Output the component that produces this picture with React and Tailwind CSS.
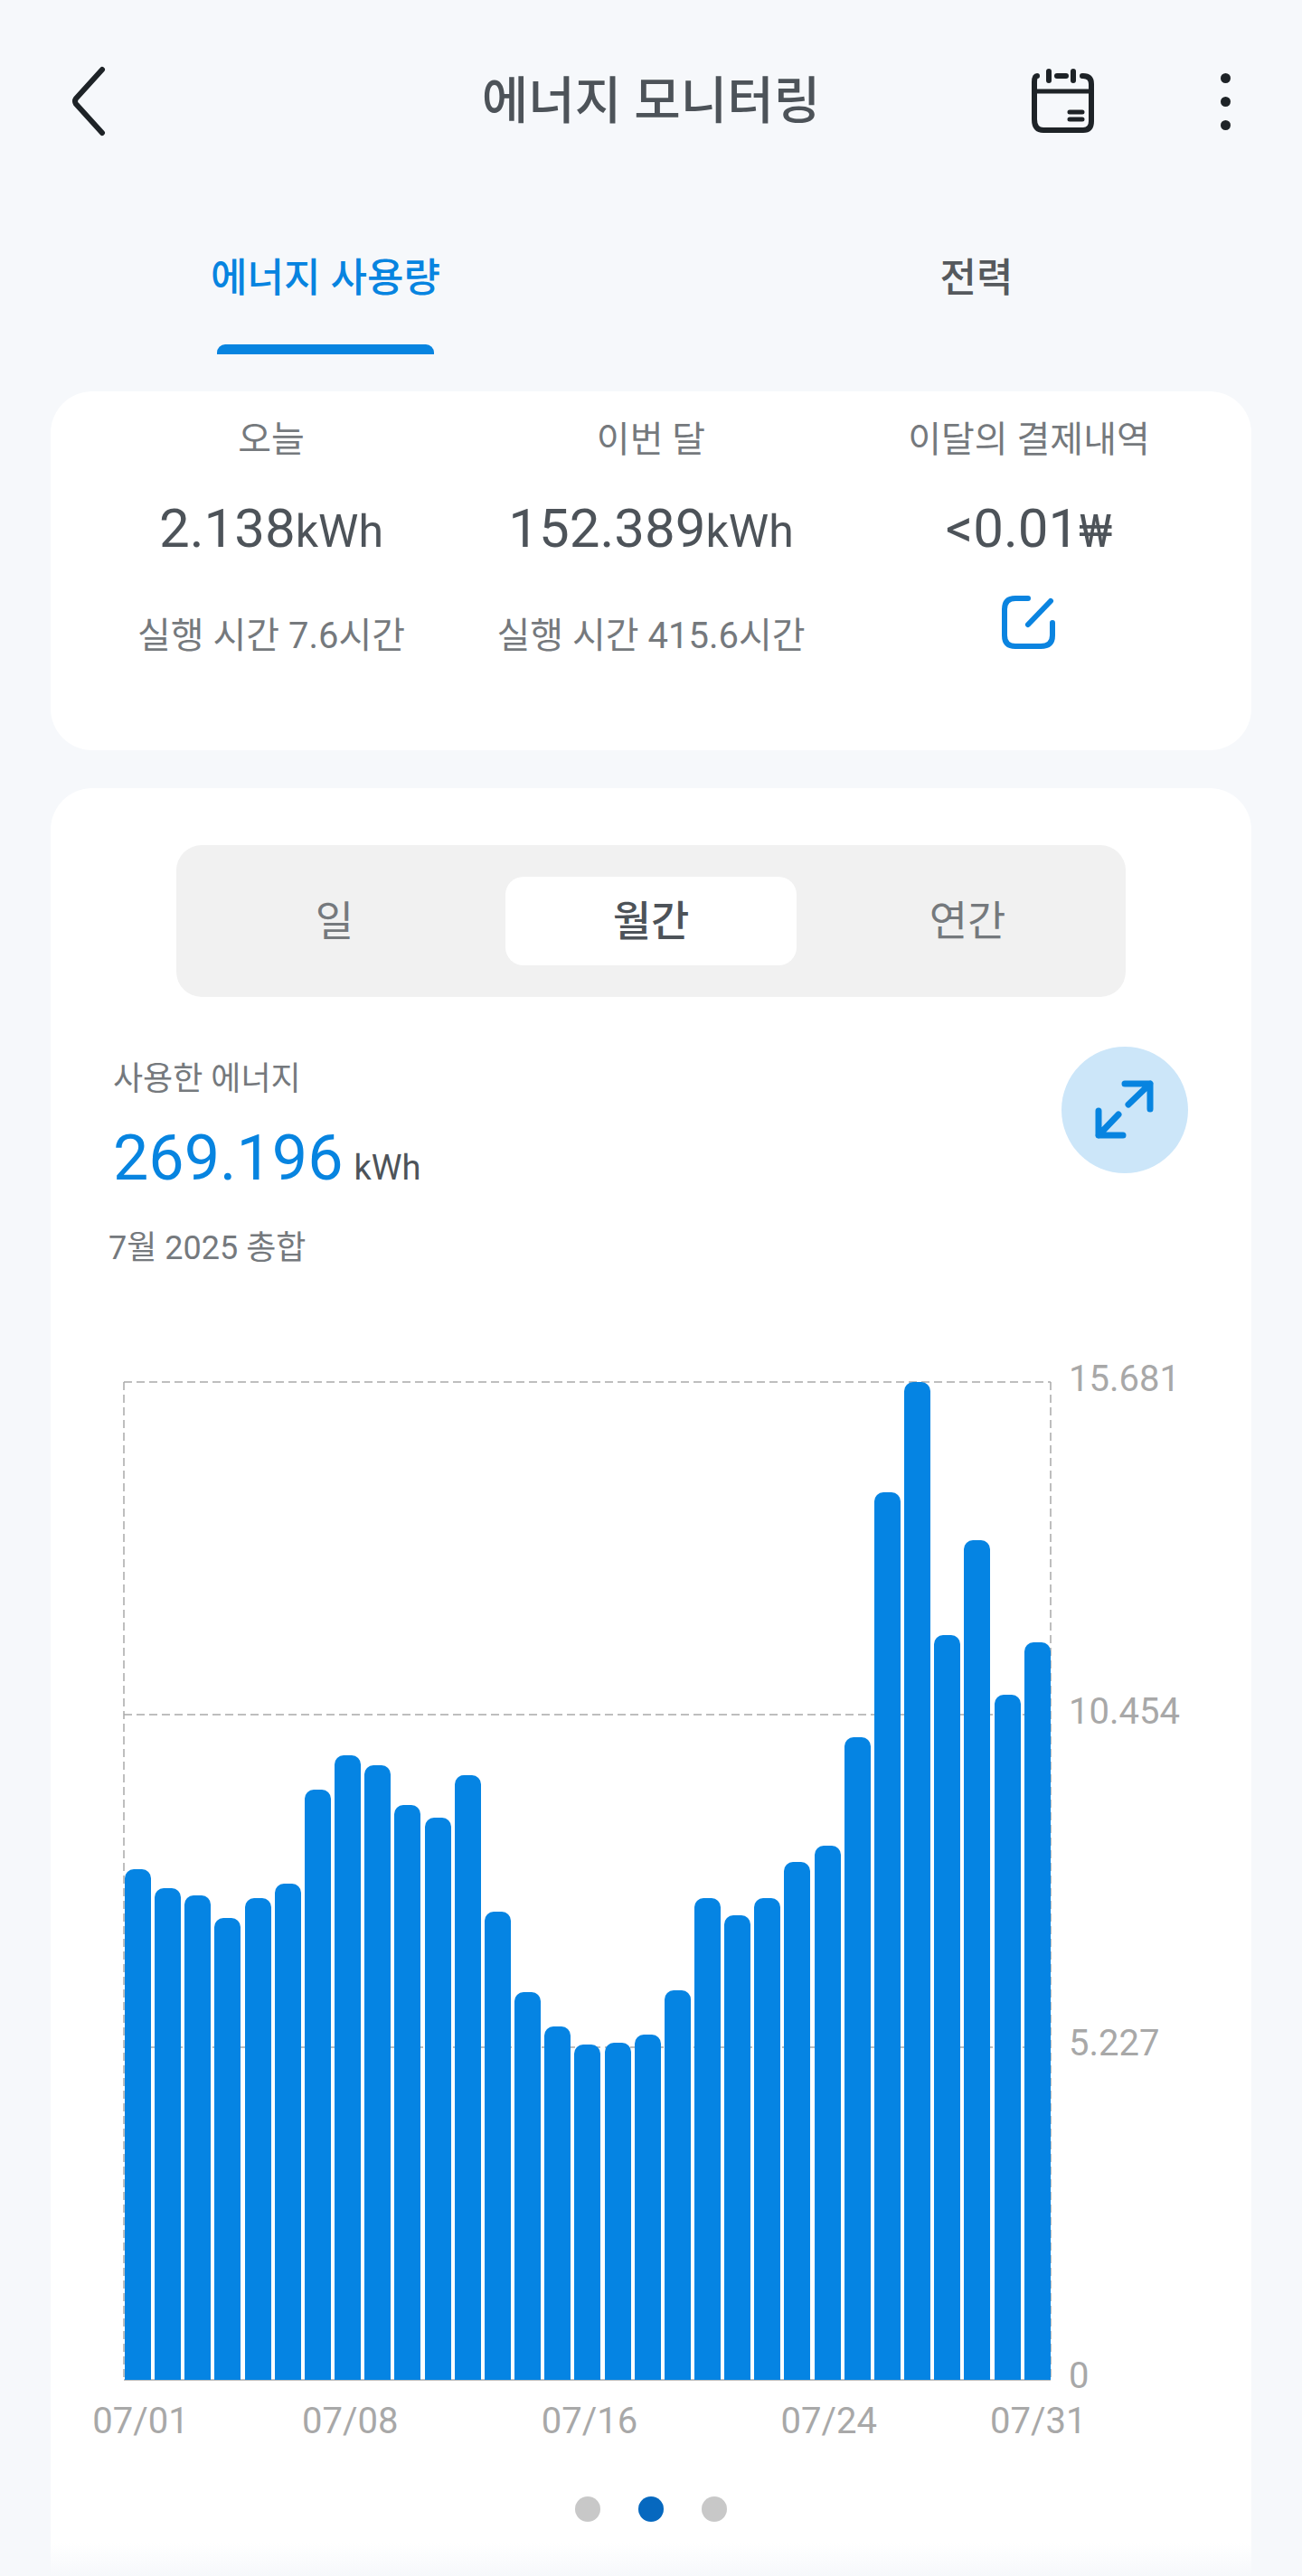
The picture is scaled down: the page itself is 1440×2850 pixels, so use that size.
const tops = [1137, 1149, 1153, 1167, 1155, 1146, 1089, 1068, 1074, 1098, 1106, 1080, 1163, 1212, 1233, 1244, 1243, 1238, 1211, 1155, 1165, 1155, 1133, 1123, 1057, 908, 841, 995, 937, 1031, 999]
const bars = tops.map((t) => Math.round((1448 - t) * 1.818))
const xLabels = { 0: '07/01', 7: '07/08', 15: '07/16', 23: '07/24', 30: '07/31' }
const stats = [
  { label: '오늘', value: '2.138', unit: 'kWh', sub: '실행 시간 7.6시간', w: 'w-[420px]' },
  { label: '이번 달', value: '152.389', unit: 'kWh', sub: '실행 시간 415.6시간', w: 'w-[420px]' },
  { label: '이달의 결제내역', value: '<0.01', unit: '₩', w: 'w-[416px]' },
]

function ChartGrid() {
  return (
    <svg className="absolute left-0 top-0" width="1028" height="1106" fill="none" stroke="#a9a9a9" strokeWidth="1.5" strokeDasharray="9 5">
      <path d="M1 1H1026" />
      <path d="M1 369H1026" />
      <path d="M1 737H1026" />
      <path d="M1 1105H1026" strokeDasharray="none" />
      <path d="M1 1V1105" />
      <path d="M1026 1V1105" />
    </svg>
  )
}

export default function App() {
  return (
    <div className="relative w-[1440px] h-[2850px] overflow-hidden bg-[#f6f8fb] font-['Roboto','Noto_Sans_CJK_KR',sans-serif]">
      {/* 헤더 */}
      <header className="flex items-center h-[224px]">
        <div className="w-[400px] pl-[76px]">
          <svg width="48" height="78" viewBox="0 0 48 78" fill="none" stroke="#1e2327" strokeWidth="6" strokeLinecap="round" strokeLinejoin="round">
            <path d="M37 4 L8 36 Q6 39 8 42 L37 74" />
          </svg>
        </div>
        <h1 className="flex-1 text-center text-[56px] leading-[72px] font-medium text-[#4d5359]">에너지 모니터링</h1>
        <div className="flex items-center w-[400px] pl-[96px]">
          <svg width="76" height="76" viewBox="0 0 76 76" fill="none" stroke="#1e2327" strokeWidth="6" strokeLinecap="round" strokeLinejoin="round">
            <path d="M11 10 Q8 10 8 17 V58 Q8 70 18 70 H62 Q71 70 71 60 V19 Q71 10 62 10 H61" />
            <path d="M24 5V15M51 5V15M33 10H43" />
            <path d="M8 27H71" strokeWidth="5" />
            <path d="M47 50H61M47 58H61" strokeWidth="5" />
          </svg>
          <div className="flex flex-col gap-[15px] ml-[138px]">
            <span className="w-[11px] h-[11px] rounded-full bg-[#1e2327]" />
            <span className="w-[11px] h-[11px] rounded-full bg-[#1e2327]" />
            <span className="w-[11px] h-[11px] rounded-full bg-[#1e2327]" />
          </div>
        </div>
      </header>

      {/* 탭 */}
      <div className="grid grid-cols-2 h-[168px] mb-[41px]">
        <div className="flex flex-col items-center justify-between">
          <span className="mt-[54px] text-[44px] leading-[60px] font-medium text-[#0784e0]">에너지 사용량</span>
          <span className="w-[240px] h-[11px] rounded-t-[9px] bg-[#0784e0]" />
        </div>
        <div className="flex flex-col items-center">
          <span className="mt-[54px] text-[44px] leading-[60px] font-medium text-[#55595d]">전력</span>
        </div>
      </div>

      {/* 요약 카드 */}
      <section className="flex mx-[56px] h-[397px] pl-[34px] rounded-[46px] bg-white">
        {stats.map((s) => (
          <div key={s.label} className={`flex flex-col items-center ${s.w}`}>
            <div className="mt-[26px] text-[40px] leading-[56px] text-[#75797d]">{s.label}</div>
            <div className="mt-[25px] h-[90px] leading-[90px] text-[#4d5359] whitespace-nowrap">
              <span className="text-[60px]">{s.value}</span>
              <span className="text-[50px]">{s.unit}</span>
            </div>
            {s.sub ? (
              <div className="mt-[46px] text-[40px] leading-[56px] whitespace-nowrap text-[#75797d]">{s.sub}</div>
            ) : (
              <svg className="mt-[27px]" width="64" height="64" viewBox="0 0 64 64" fill="none" stroke="#0b84e0" strokeWidth="6" strokeLinecap="round">
                <path d="M31 5 H17 Q5 5 5 17 V46 Q5 58 17 58 H45 Q58 58 58 46 V32" />
                <path d="M56 8 L31 34" />
              </svg>
            )}
          </div>
        ))}
      </section>

      {/* 차트 카드 */}
      <section className="relative mt-[42px] mx-[56px] h-[1978px] rounded-t-[46px] bg-white">
        <div className="pt-[63px] pl-[139px]">
          <div className="grid grid-cols-3 items-center w-[1050px] h-[168px] rounded-[28px] bg-[#f1f1f1] text-[46px] text-[#75797d]">
            <div className="text-center">일</div>
            <div className="flex items-center justify-center justify-self-center w-[322px] h-[98px] rounded-[20px] bg-white font-medium text-[#4d5359]">월간</div>
            <div className="text-center">연간</div>
          </div>
        </div>

        <div className="flex justify-between mt-[55px] pl-[69px] pr-[70px]">
          <div>
            <div className="mt-[12px] text-[36px] leading-[48px] text-[#75797d]">사용한 에너지</div>
            <div className="flex items-baseline gap-[12px] mt-[21px] h-[84px] leading-[84px]">
              <span className="text-[70px] text-[#0784e0]">269.196</span>
              <span className="text-[38px] text-[#4d5359]">kWh</span>
            </div>
            <div className="-ml-[5px] mt-[34px] text-[36px] leading-[48px] text-[#75797d]">7월 2025 총합</div>
          </div>
          <div className="flex items-center justify-center w-[140px] h-[140px] rounded-full bg-[#cce6f9]">
            <svg width="72" height="72" viewBox="0 0 72 72" fill="none" stroke="#0784e0" strokeWidth="7" strokeLinecap="round" strokeLinejoin="round">
              <path d="M36 7H64V35M64 7L40 30M7 37V64H34M7 64L29 41" />
            </svg>
          </div>
        </div>

        {/* 차트 */}
        <div className="flex mt-[123px] ml-[80px]">
          <div className="relative w-[1028px] h-[1106px]">
            <ChartGrid />
            <div className="absolute inset-x-[2px] bottom-[1px] flex items-end justify-between">
              {bars.map((h, i) => (
                <div key={i} className="w-[29px] rounded-t-[10px] bg-[#0584e3]" style={{ height: h }} />
              ))}
            </div>
          </div>
          <div className="flex flex-col justify-between h-[1151px] -mt-[26px] ml-[18px] text-[40px] leading-[48px] text-[#a8a8a8]">
            <span>15.681</span>
            <span>10.454</span>
            <span>5.227</span>
            <span>0</span>
          </div>
        </div>

        <div className="flex justify-between w-[1022px] ml-[85px] mt-[-4px] h-[60px] text-[40px] leading-[60px] text-[#a8a8a8]">
          {bars.map((_, i) => (
            <span key={i} className="flex justify-center w-[29px] whitespace-nowrap">{xLabels[i]}</span>
          ))}
        </div>

        <div className="flex justify-center gap-[42px] mt-[53px]">
          <span className="w-[28px] h-[28px] rounded-full bg-[#c8c8c8]" />
          <span className="w-[28px] h-[28px] rounded-full bg-[#0668bf]" />
          <span className="w-[28px] h-[28px] rounded-full bg-[#c8c8c8]" />
        </div>

        <div className="absolute inset-x-0 bottom-0 h-[36px] bg-gradient-to-b from-transparent to-[#f6f8fb]" />
      </section>
    </div>
  )
}
